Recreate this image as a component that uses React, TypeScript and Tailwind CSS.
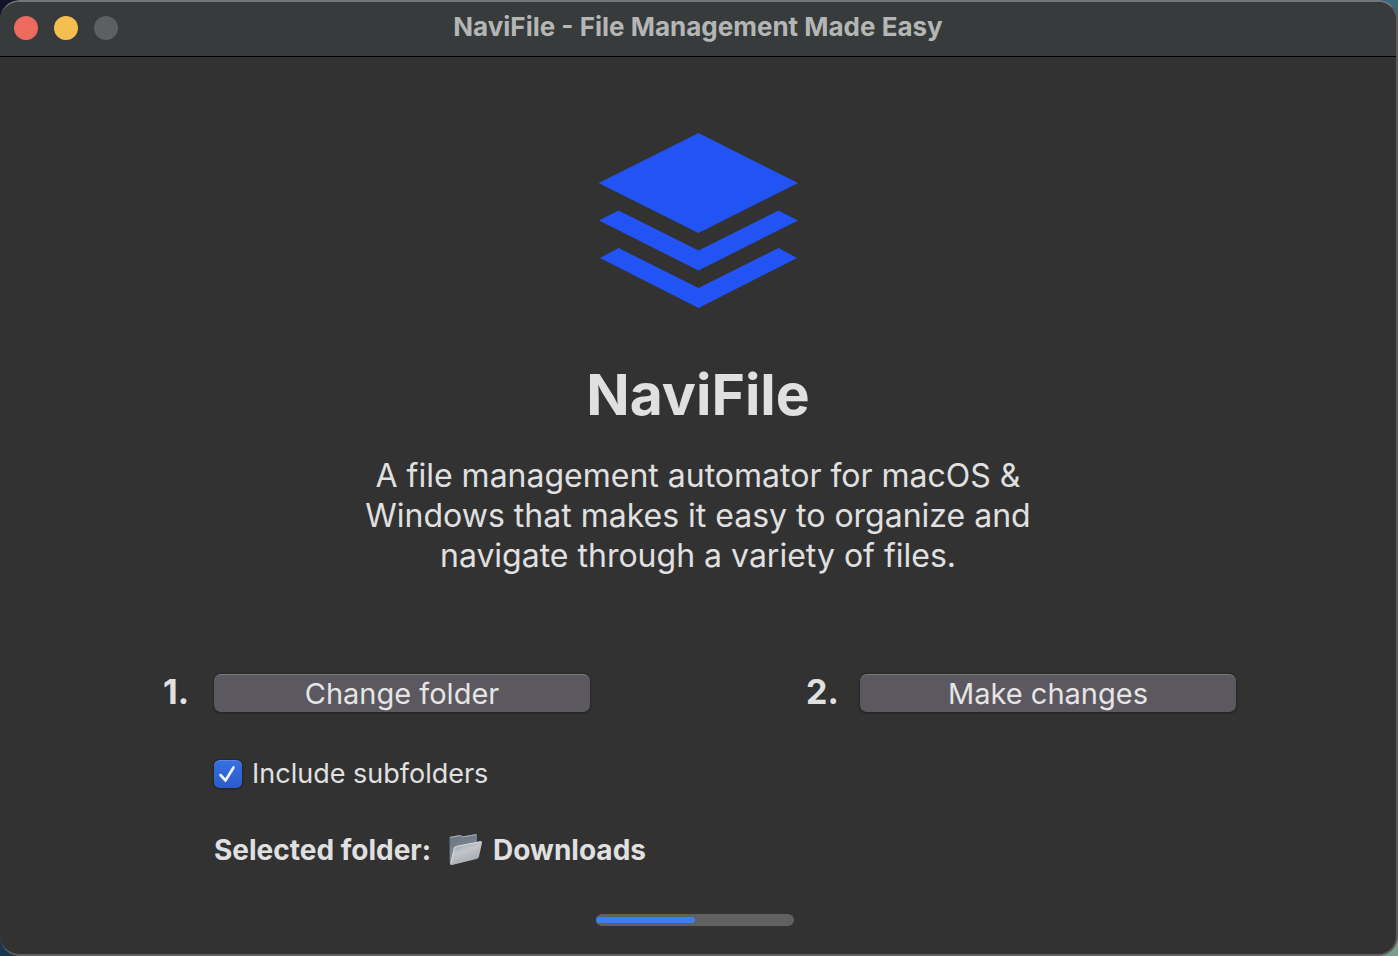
import { useState, type ReactNode } from 'react';

function Logo() {
  return (
    <svg className="h-[176px] w-[200px]" viewBox="0 0 200 176" fill="#2153f5" aria-hidden="true">
      <path d="M100.5 0 200 50 100.5 100 0.5 50Z" />
      <path d="M1 87.5 20.5 77.5 100.5 117.5 180.5 77.5 200 87.5 100.5 137.5Z" />
      <path d="M2 125 20.5 115 100.5 155 180.5 115 199 125 100.5 175Z" />
    </svg>
  );
}

function FolderIcon() {
  return (
    <svg className="h-8 w-[34px]" viewBox="0 0 34 32" aria-hidden="true">
      <defs>
        <linearGradient id="folderBack" x1="0" y1="0" x2="0.3" y2="1">
          <stop offset="0" stopColor="#65717c" />
          <stop offset="1" stopColor="#8995a2" />
        </linearGradient>
        <linearGradient id="folderFront" x1="0" y1="0" x2="0.5" y2="1">
          <stop offset="0" stopColor="#989da5" />
          <stop offset="0.5" stopColor="#c2c5cb" />
          <stop offset="1" stopColor="#a4a9b0" />
        </linearGradient>
      </defs>
      <path
        d="M0.500 4Q0.500 3 1.500 2.800L11 1Q12 .8 12.500 1.600L13 2.400 26.500.2Q28 0 28 1.300V9L4 30 2 30.500Q0.800 30.500 0.800 29Z"
        fill="url(#folderBack)"
      />
      <path d="M1 3.500 11.500 1.500 13 3 27.500.7" fill="none" stroke="#aab4be" strokeWidth="1" />
      <path
        d="M4.800 14Q5.300 12.300 7.300 11.900L31.500 7.200Q33.600 6.800 33 8.800L30 22.500Q29.500 24.500 27.500 25L3 31Q1 31.300 1.300 29.500Z"
        fill="url(#folderFront)"
      />
      <path d="M2 29 5.300 14.300Q5.800 12.800 7.300 12.400L32 7.700" fill="none" stroke="#d3d7dc" strokeWidth="1" />
    </svg>
  );
}

function Step({ number, children }: { number: string; children: ReactNode }) {
  return (
    <div className="flex items-center">
      <b className="w-[54px] pr-[25px] text-right text-[34px] leading-9 pb-[2px]">{number}</b>
      <button
        type="button"
        className="h-[38px] w-[376px] rounded-[7px] border-t border-[#7b797f] bg-[#5b585f] text-[29px] leading-9 text-[#e5e5e6] shadow-[0_0_1px_1px_#282828,0_1px_2px_#1c1c1c]"
      >
        {children}
      </button>
    </div>
  );
}

export default function App() {
  const [subfolders, setSubfolders] = useState(true);
  const progress = 50;

  return (
    <div className="flex min-h-screen flex-col bg-[conic-gradient(#39697a_25%,#76a08a_25%_50%,#173654_50%_75%,#12122a_75%)] font-['Inter',sans-serif] text-[#e0e0e0]">
      <div className="flex grow flex-col overflow-hidden rounded-[20px] border-y-2 border-r-2 border-t-[#727676] border-r-[#5c5c5c] border-b-[#606060] bg-[#323232]">
        <header className="grid h-[55px] grid-cols-[1fr_auto_1fr] items-center border-b border-black bg-[#373b3b] px-[14px] pb-[2px]">
          <div className="flex gap-4">
            <button type="button" aria-label="Close" className="size-6 rounded-full bg-[#ed6a5e]" />
            <button type="button" aria-label="Minimize" className="size-6 rounded-full bg-[#f5bf4f]" />
            <button type="button" aria-label="Zoom" className="size-6 rounded-full bg-[#5d5f60]" />
          </div>
          <p className="pb-[2px] text-[26px] leading-8 font-bold text-[#b4b6b6]">NaviFile - File Management Made Easy</p>
        </header>
        <main className="flex grow flex-col items-center pt-[76px]">
          <Logo />
          <h1 className="mt-12 text-[57px] leading-[76px] font-bold">NaviFile</h1>
          <p className="mt-[23px] max-w-[690px] text-center text-[32px] leading-10">
            A file management automator for macOS &amp; Windows that makes it easy to organize and navigate through a
            variety of files.
          </p>
          <div className="mt-[98px] w-full px-40">
            <div className="flex justify-between">
              <Step number="1.">Change folder</Step>
              <Step number="2.">Make changes</Step>
            </div>
            <div className="mt-12 flex flex-col items-start pl-[54px]">
              <label className="flex items-center gap-[10px] text-[27px] leading-7">
                <span className="grid size-7">
                  <input
                    type="checkbox"
                    checked={subfolders}
                    onChange={(e) => setSubfolders(e.target.checked)}
                    className="peer col-start-1 row-start-1 size-7 appearance-none rounded-md border-t border-[#5b86e6] bg-[#5b585f] shadow-[0_0_1px_1px_#282828,0_1px_2px_#1c1c1c] checked:bg-linear-to-b checked:from-[#3670e2] checked:to-[#2a5cc8]"
                  />
                  <svg
                    className="pointer-events-none invisible col-start-1 row-start-1 size-7 peer-checked:visible"
                    viewBox="0 0 28 28"
                    fill="none"
                    stroke="#eef2fc"
                    strokeWidth="2.7"
                    strokeLinecap="round"
                    strokeLinejoin="round"
                    aria-hidden="true"
                  >
                    <path d="M6.5 15 11.5 20.5 19.5 7.5" />
                  </svg>
                </span>
                Include subfolders
              </label>
              <p className="mt-[46px] flex items-center text-[28px] leading-8 font-bold">
                Selected folder:
                <span className="flex items-center gap-[10px] pl-[18px]">
                  <FolderIcon />
                  Downloads
                </span>
              </p>
            </div>
          </div>
          <div
            role="progressbar"
            aria-label="Progress"
            aria-valuenow={progress}
            aria-valuemin={0}
            aria-valuemax={100}
            className="mt-12 mr-[6px] flex h-3 w-[198px] items-center rounded-full bg-[#616161]"
          >
            <div className="h-[6px] rounded-full bg-[#3b7ff5]" style={{ width: `${progress}%` }} />
          </div>
        </main>
      </div>
    </div>
  );
}
